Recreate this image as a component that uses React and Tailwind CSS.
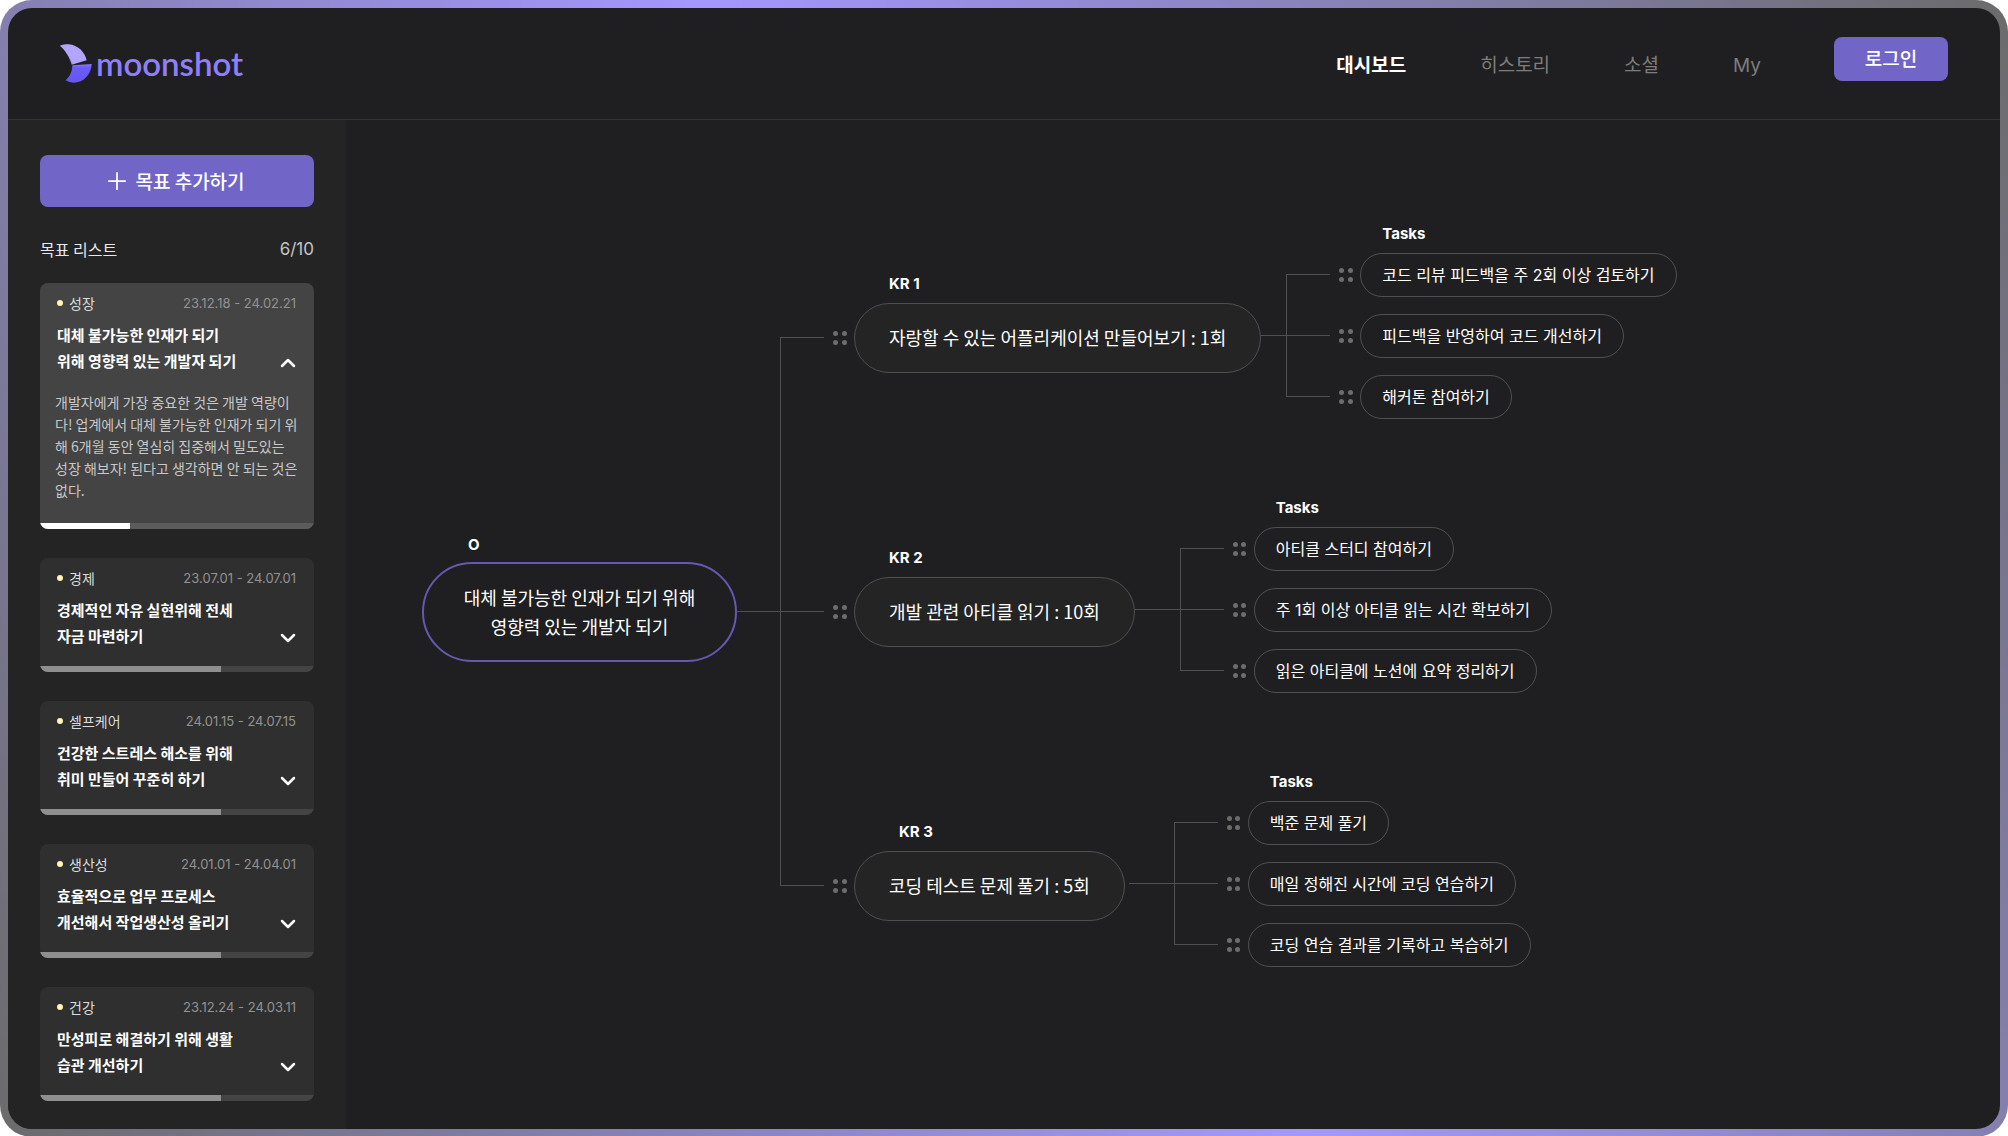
import React from "react";
import { ChevronDown, ChevronUp, Plus } from "lucide-react";

const goals = [
  {
    category: "성장",
    period: "23.12.18 - 24.02.21",
    title: ["대체 불가능한 인재가 되기", "위해 영향력 있는 개발자 되기"],
    body: [
      "개발자에게 가장 중요한 것은 개발 역량이",
      "다! 업계에서 대체 불가능한 인재가 되기 위",
      "해 6개월 동안 열심히 집중해서 밀도있는",
      "성장 해보자! 된다고 생각하면 안 되는 것은",
      "없다.",
    ],
    progress: 33,
    open: true,
  },
  {
    category: "경제",
    period: "23.07.01 - 24.07.01",
    title: ["경제적인 자유 실현위해 전세", "자금 마련하기"],
    progress: 66,
  },
  {
    category: "셀프케어",
    period: "24.01.15 - 24.07.15",
    title: ["건강한 스트레스 해소를 위해", "취미 만들어 꾸준히 하기"],
    progress: 66,
  },
  {
    category: "생산성",
    period: "24.01.01 - 24.04.01",
    title: ["효율적으로 업무 프로세스", "개선해서 작업생산성 올리기"],
    progress: 66,
  },
  {
    category: "건강",
    period: "23.12.24 - 24.03.11",
    title: ["만성피로 해결하기 위해 생활", "습관 개선하기"],
    progress: 66,
  },
];

const keyResults = [
  {
    label: "KR 1",
    labelPad: "pl-[35px]",
    text: "자랑할 수 있는 어플리케이션 만들어보기 : 1회",
    link: "w-[25px]",
    linkPad: "pl-[25px]",
    tasks: ["코드 리뷰 피드백을 주 2회 이상 검토하기", "피드백을 반영하여 코드 개선하기", "해커톤 참여하기"],
  },
  {
    label: "KR 2",
    labelPad: "pl-[35px]",
    text: "개발 관련 아티클 읽기 : 10회",
    link: "w-[45px]",
    linkPad: "pl-[45px]",
    tasks: ["아티클 스터디 참여하기", "주 1회 이상 아티클 읽는 시간 확보하기", "읽은 아티클에 노션에 요약 정리하기"],
  },
  {
    label: "KR 3",
    labelPad: "pl-[45px]",
    text: "코딩 테스트 문제 풀기 : 5회",
    link: "w-[45px] ml-1",
    linkPad: "pl-[49px]",
    tasks: ["백준 문제 풀기", "매일 정해진 시간에 코딩 연습하기", "코딩 연습 결과를 기록하고 복습하기"],
  },
];

const latin = "font-['Inter','Noto_Sans_CJK_KR',sans-serif]";

function Logo() {
  return (
    <a href="#home" aria-label="moonshot" className="flex items-center gap-1 text-[#8f7ffb]">
      <svg className="h-10 w-[33px]" viewBox="28 20 99 120" aria-hidden="true">
        <defs>
          <linearGradient id="moonTop" x1="0" y1="0.65" x2="0.5" y2="0.4">
            <stop offset="0.3" stopColor="#7060f8" />
            <stop offset="0.6" stopColor="#b3a5ff" />
          </linearGradient>
          <linearGradient id="moonBottom" x1="0" y1="0" x2="0" y2="1">
            <stop offset="0" stopColor="#8878ff" />
            <stop offset="0.2" stopColor="#6c5cf8" />
            <stop offset="1" stopColor="#6656f0" />
          </linearGradient>
        </defs>
        <path d="M30 28 Q41 22 57 24 C85 27 105 46 111 72 L66 85 C60 62 47 42 30 28Z" fill="url(#moonTop)" />
        <path d="M68 87 L126 83 C125 113 103 139 72 139 Q58 139 48 132 C60 121 68 106 68 87Z" fill="url(#moonBottom)" />
      </svg>
      <span className="font-['Lato',sans-serif] text-[33px] leading-10 font-semibold">moonshot</span>
    </a>
  );
}

function Header() {
  const links = ["대시보드", "히스토리", "소셜", "My"];
  return (
    <header className="flex h-28 items-start justify-between border-b border-[#343436] pl-[51px] pr-[52px]">
      <div className="pt-[35px]">
        <Logo />
      </div>
      <div className="flex items-start gap-[73px] pt-[29px]">
        <nav className="flex items-baseline gap-[74px] pt-3 text-[19px] leading-[30px]">
          {links.map((l, i) => (
            <a
              key={l}
              href={"#" + i}
              className={i === 0 ? "font-bold text-white" : "font-['Inter','Noto_Sans_CJK_KR',sans-serif] text-[#7d7d7d]"}
            >
              {l}
            </a>
          ))}
        </nav>
        <button className="flex h-11 w-[114px] items-center justify-center rounded-lg bg-[#7166c8] pb-[2px] text-[19px] font-medium text-white">
          로그인
        </button>
      </div>
    </header>
  );
}

function GoalCard({ goal }) {
  const Chevron = goal.open ? ChevronUp : ChevronDown;
  return (
    <article className={"overflow-hidden rounded-lg " + (goal.open ? "bg-[#444444]" : "bg-[#2f2f2f]")}>
      <div className="pt-[10px] pr-[18px] pl-[17px]">
        <div className="flex items-center justify-between leading-5">
          <span className="flex items-center gap-[6px] text-[14px] text-[#dcdcdc]">
            <span className="size-[6px] rounded-full bg-[#fff6b8]" />
            {goal.category}
          </span>
          <span className={latin + " text-[13px] text-[#929292]"}>{goal.period}</span>
        </div>
        <div className="mt-[9px] flex items-end justify-between">
          <h3 className="text-[15px] leading-[26px] font-bold text-white">
            {goal.title[0]}
            <br />
            {goal.title[1]}
          </h3>
          <button
            aria-label={goal.open ? "목표 접기" : "목표 펼치기"}
            className="-mr-1 -mb-[2px] flex h-[26px] items-center text-white"
          >
            <Chevron size={24} strokeWidth={2.5} />
          </button>
        </div>
      </div>
      {goal.body && (
        <p className="mt-[17px] pb-[5px] pl-[15px] text-[14px] leading-[22px] whitespace-pre text-[#c8c8c8]">
          {goal.body.join("\n")}
        </p>
      )}
      <div
        role="progressbar"
        aria-valuenow={goal.progress}
        aria-label={goal.category}
        className={"mt-[17px] h-[6px] " + (goal.open ? "bg-[#5b5b5b]" : "bg-[#444444]")}
      >
        <div className={"h-full " + (goal.open ? "bg-white" : "bg-[#8f8f8f]")} style={{ width: goal.progress + "%" }} />
      </div>
    </article>
  );
}

function Sidebar() {
  return (
    <aside className="w-[338px] shrink-0 bg-[#242424] pt-[35px] pr-8 pb-7 pl-8">
      <button className="flex h-[52px] w-full items-center justify-center gap-1 rounded-lg bg-[#7166c8] pr-[6px] text-[19px] font-medium text-white">
        <Plus size={28} strokeWidth={1.5} />
        목표 추가하기
      </button>
      <div className="mt-7 mb-5 flex items-center justify-between leading-7 text-[#e8e8e8]">
        <h2 className="text-[16px]">목표 리스트</h2>
        <span className={latin + " text-[17px] text-[#c4c4c4]"}>6/10</span>
      </div>
      <div className="flex flex-col gap-[29px]">
        {goals.map((g) => (
          <GoalCard key={g.category} goal={g} />
        ))}
      </div>
    </aside>
  );
}

/* One arm of a bracket connector: a spine on the left and a stub to the right. */
function Branch({ first, last }) {
  return (
    <div className="flex w-11 shrink-0 flex-col self-stretch">
      <div className={"flex-1 border-b border-[#505052] " + (first ? "" : "border-l")} />
      <div className={"flex-1 border-[#505052] " + (last ? "" : "border-l")} />
    </div>
  );
}

function Handle() {
  return (
    <button aria-label="순서 변경" className="mr-2 ml-[9px] grid w-[13px] shrink-0 grid-cols-2 gap-1">
      {[0, 1, 2, 3].map((i) => (
        <span key={i} className="size-[5px] rounded-full bg-[#6d6d6d]" />
      ))}
    </button>
  );
}

function Tasks({ kr }) {
  return (
    <div className="flex flex-col pb-6">
      <div className={kr.linkPad}>
        <h4 className={latin + " pl-24 text-[15px] leading-5 font-bold text-white"}>Tasks</h4>
      </div>
      <div className="flex items-center">
        <div className={"h-px bg-[#505052] " + kr.link} />
        <ul className="flex flex-col">
          {kr.tasks.map((t, i) => (
            <li key={t} className="flex h-[61px] items-center">
              <Branch first={i === 0} last={i === kr.tasks.length - 1} />
              <Handle />
              <div className={latin + " flex h-11 items-center rounded-full border border-[#505052] px-[21px] text-[16px] whitespace-nowrap text-white"}>
                {t}
              </div>
            </li>
          ))}
        </ul>
      </div>
    </div>
  );
}

function Board() {
  return (
    <main className="flex flex-1 items-center pb-[26px] pl-[76px] text-white">
      <section className="flex shrink-0 flex-col pb-[27px]">
        <h2 className={latin + " mb-[7px] pl-[46px] text-[15px] leading-5 font-bold"}>O</h2>
        <div className="flex h-[100px] w-[315px] items-center justify-center rounded-full border-2 border-[#6459b0] text-center text-[18px] leading-[29px]">
          <p>
            대체 불가능한 인재가 되기 위해
            <br />
            영향력 있는 개발자 되기
          </p>
        </div>
      </section>
      <div className="h-px w-[43px] shrink-0 bg-[#505052]" />
      <ul className="flex flex-col">
        {keyResults.map((kr, i) => (
          <li key={kr.label} className="flex h-[274px] items-center">
            <Branch first={i === 0} last={i === keyResults.length - 1} />
            <Handle />
            <section className="flex flex-col pb-[29px]">
              <h3 className={latin + " mb-[9px] text-[15px] leading-5 font-bold " + kr.labelPad}>{kr.label}</h3>
              <div className="flex h-[70px] items-center rounded-full border border-[#505052] bg-[#242424] px-[34px] text-[18px] whitespace-nowrap">
                {kr.text}
              </div>
            </section>
            <Tasks kr={kr} />
          </li>
        ))}
      </ul>
    </main>
  );
}

export default function App() {
  return (
    <div className="flex min-h-screen bg-white font-['Noto_Sans_CJK_KR','Inter',sans-serif]">
      <div className="flex flex-1 rounded-[32px] bg-[linear-gradient(62deg,#6b6b6b_0%,#a497ff_50%,#6b6b6b_100%)] p-2">
        <div className="flex flex-1 flex-col overflow-hidden rounded-3xl bg-[#1f1f21]">
          <Header />
          <div className="flex flex-1">
            <Sidebar />
            <Board />
          </div>
        </div>
      </div>
    </div>
  );
}
